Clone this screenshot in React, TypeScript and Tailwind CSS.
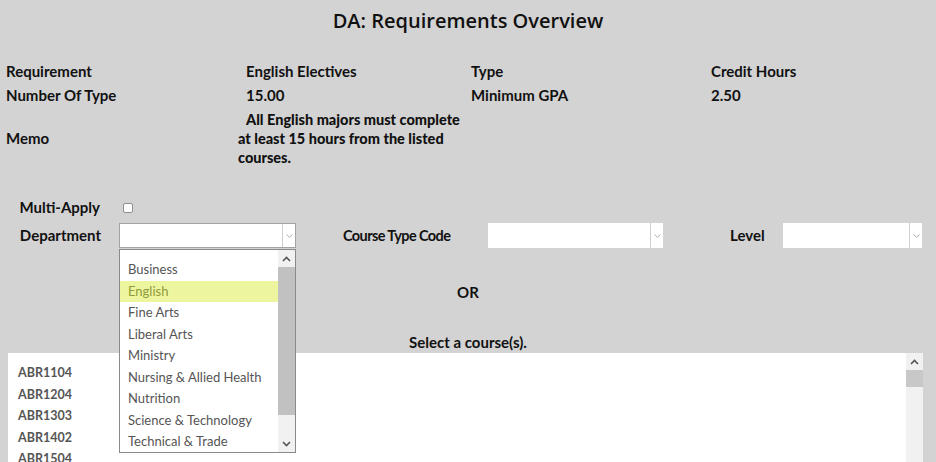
import React from "react";

const departments = [
  "Business",
  "English",
  "Fine Arts",
  "Liberal Arts",
  "Ministry",
  "Nursing & Allied Health",
  "Nutrition",
  "Science & Technology",
  "Technical & Trade",
];

const courses = ["ABR1104", "ABR1204", "ABR1303", "ABR1402", "ABR1504"];

const Caret = ({ up = false }: { up?: boolean }) => (
  <svg width="9" height="6" viewBox="0 0 9 6" className={up ? "" : "rotate-180"}>
    <path d="M1 5 L4.5 1.5 L8 5" fill="none" stroke="#555" strokeWidth="1.6" />
  </svg>
);

const SmallChevron = () => (
  <svg width="7" height="4" viewBox="0 0 7 4">
    <path d="M0.5 0.5 L3.5 3.2 L6.5 0.5" fill="none" stroke="#a8a8a8" strokeWidth="1" />
  </svg>
);

const SelectBox = ({ width, bordered = false }: { width: string; bordered?: boolean }) => (
  <div
    className={`${width} h-[25px] bg-white flex ${bordered ? "border border-[#a3a3a3]" : ""}`}
  >
    <div className="flex-1" />
    <div className="w-[13px] border-l border-[#cfcfcf] flex items-center justify-center">
      <SmallChevron />
    </div>
  </div>
);

export default function App() {
  return (
    <div
      className="w-[936px] h-[462px] bg-[#d3d3d3] overflow-hidden relative text-[#111]"
      style={{ fontFamily: "Lato, 'Open Sans', sans-serif" }}
    >
      <h1
        className="text-center text-[20px] font-semibold pt-[6px] h-[59px]"
        style={{ fontFamily: "'Open Sans', sans-serif" }}
      >
        DA: Requirements Overview
      </h1>

      {/* requirement info */}
      <div className="pl-[6px] text-[15px] font-bold">
        <div className="grid grid-cols-[240px_225px_240px_1fr] h-[24px] items-center">
          <span>Requirement</span>
          <span>English Electives</span>
          <span>Type</span>
          <span>Credit Hours</span>
        </div>
        <div className="grid grid-cols-[240px_225px_240px_1fr] h-[24px] items-center">
          <span>Number Of Type</span>
          <span>15.00</span>
          <span>Minimum GPA</span>
          <span>2.50</span>
        </div>
        <div className="flex items-center mt-[3px]">
          <span className="w-[232px]">Memo</span>
          <p className="w-[240px] indent-[8px] font-black text-[14.5px] leading-[19px]">
            All English majors must complete
            <br />
            at least 15 hours from the listed
            <br />
            courses.
          </p>
        </div>
      </div>

      {/* filters */}
      <div className="mt-[30px] text-[15px] font-bold">
        <div className="flex items-center h-[21px]">
          <span className="w-[100px] text-right">Multi-Apply</span>
          <input
            type="checkbox"
            className="ml-[23px] w-[10px] h-[10px] appearance-none bg-white border border-[#8f8f8f] rounded-[2px]"
          />
        </div>
        <div className="flex items-center mt-[5px]">
          <span className="w-[101px] text-right">Department</span>
          <div className="ml-[18px] relative">
            <SelectBox width="w-[177px]" bordered />
            <div className="absolute left-0 top-[26px] w-[177px] h-[204px] bg-white border border-[#8a8a8a] z-10 flex">
              <ul className="flex-1 pt-[9px] text-[13px] font-normal text-[#555]">
                {departments.map((d) => (
                  <li
                    key={d}
                    className={`h-[21.5px] leading-[21.5px] pl-[8px] ${
                      d === "English" ? "bg-[#eef59f] text-[#8f9a3c]" : ""
                    }`}
                  >
                    {d}
                  </li>
                ))}
              </ul>
              <div className="w-[17px] bg-[#f1f1f1] flex flex-col">
                <div className="h-[17px] flex items-center justify-center">
                  <Caret up />
                </div>
                <div className="h-[148px] bg-[#c1c1c1]" />
                <div className="flex-1" />
                <div className="h-[17px] flex items-center justify-center">
                  <Caret />
                </div>
              </div>
            </div>
          </div>
          <span className="ml-[47px] w-[145px] text-[14.5px] tracking-[-0.6px]">
            Course Type Code
          </span>
          <SelectBox width="w-[175px]" />
          <span className="ml-[67px] w-[53px]">Level</span>
          <SelectBox width="w-[139px]" />
        </div>
      </div>

      <div className="text-center text-[15px] font-bold mt-[33px]">OR</div>
      <div className="text-center text-[15px] font-bold mt-[27px]">Select a course(s).</div>

      {/* course list */}
      <div className="ml-[8px] w-[915px] h-[120px] bg-white flex">
        <ul className="flex-1 pt-[9px] pl-[10px] text-[12.5px] font-bold text-[#555]">
          {courses.map((c) => (
            <li key={c} className="h-[21.5px] leading-[21.5px]">
              {c}
            </li>
          ))}
        </ul>
        <div className="w-[17px] bg-[#f1f1f1] flex flex-col">
          <div className="h-[17px] flex items-center justify-center">
            <Caret up />
          </div>
          <div className="h-[17px] bg-[#c8c8c8]" />
        </div>
      </div>
    </div>
  );
}
